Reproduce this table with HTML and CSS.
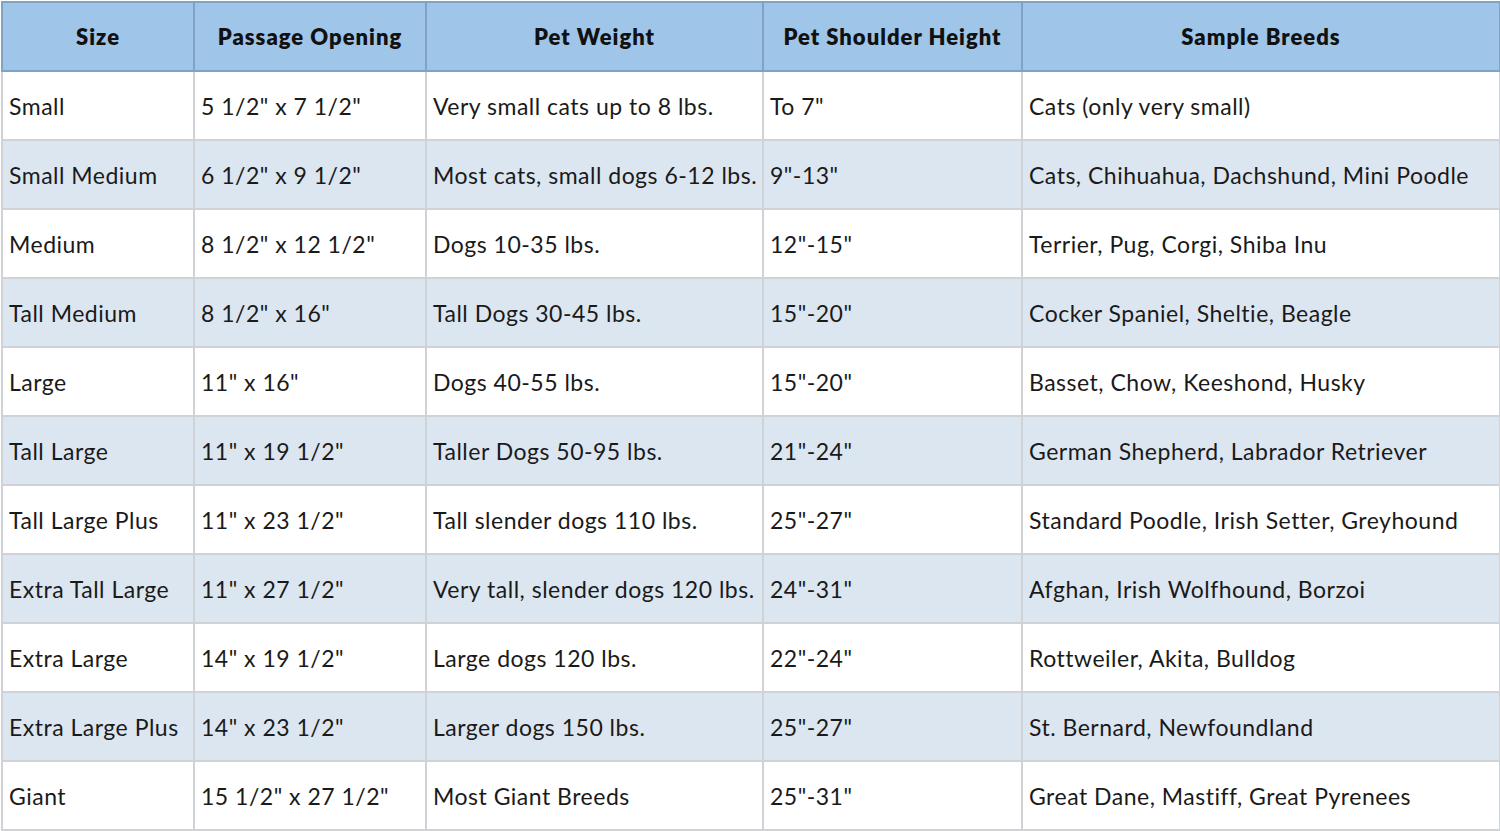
FILE: index.html
```html
<!DOCTYPE html>
<html>
<head>
<meta charset="utf-8">
<link rel="stylesheet" href="styles.css">
</head>
<body>
<table class="sizes">
  <colgroup>
    <col class="c1"><col class="c2"><col class="c3"><col class="c4"><col class="c5">
  </colgroup>
  <thead>
    <tr><th>Size</th><th>Passage Opening</th><th>Pet Weight</th><th>Pet Shoulder Height</th><th>Sample Breeds</th></tr>
  </thead>
  <tbody>
    <tr><td>Small</td><td>5 1/2" x 7 1/2"</td><td>Very small cats up to 8 lbs.</td><td>To 7"</td><td>Cats (only very small)</td></tr>
    <tr class="alt"><td>Small Medium</td><td>6 1/2" x 9 1/2"</td><td>Most cats, small dogs 6-12 lbs.</td><td>9"-13"</td><td>Cats, Chihuahua, Dachshund, Mini Poodle</td></tr>
    <tr><td>Medium</td><td>8 1/2" x 12 1/2"</td><td>Dogs 10-35 lbs.</td><td>12"-15"</td><td>Terrier, Pug, Corgi, Shiba Inu</td></tr>
    <tr class="alt"><td>Tall Medium</td><td>8 1/2" x 16"</td><td>Tall Dogs 30-45 lbs.</td><td>15"-20"</td><td>Cocker Spaniel, Sheltie, Beagle</td></tr>
    <tr><td>Large</td><td>11" x 16"</td><td>Dogs 40-55 lbs.</td><td>15"-20"</td><td>Basset, Chow, Keeshond, Husky</td></tr>
    <tr class="alt"><td>Tall Large</td><td>11" x 19 1/2"</td><td>Taller Dogs 50-95 lbs.</td><td>21"-24"</td><td>German Shepherd, Labrador Retriever</td></tr>
    <tr><td>Tall Large Plus</td><td>11" x 23 1/2"</td><td>Tall slender dogs 110 lbs.</td><td>25"-27"</td><td>Standard Poodle, Irish Setter, Greyhound</td></tr>
    <tr class="alt"><td>Extra Tall Large</td><td>11" x 27 1/2"</td><td>Very tall, slender dogs 120 lbs.</td><td>24"-31"</td><td>Afghan, Irish Wolfhound, Borzoi</td></tr>
    <tr><td>Extra Large</td><td>14" x 19 1/2"</td><td>Large dogs 120 lbs.</td><td>22"-24"</td><td>Rottweiler, Akita, Bulldog</td></tr>
    <tr class="alt"><td>Extra Large Plus</td><td>14" x 23 1/2"</td><td>Larger dogs 150 lbs.</td><td>25"-27"</td><td>St. Bernard, Newfoundland</td></tr>
    <tr><td>Giant</td><td>15 1/2" x 27 1/2"</td><td>Most Giant Breeds</td><td>25"-31"</td><td>Great Dane, Mastiff, Great Pyrenees</td></tr>
  </tbody>
</table>
</body>
</html>
```
FILE: styles.css
```css
html, body {
  margin: 0;
  padding: 0;
  background: #ffffff;
}
body {
  padding: 1px 0 0 1px;
  font-family: "Lato", "Liberation Sans", sans-serif;
  color: #1a1a1a;
}
.sizes {
  border-collapse: collapse;
  table-layout: fixed;
  width: 1498px;
}
.c1 { width: 192px; }
.c2 { width: 232px; }
.c3 { width: 337px; }
.c4 { width: 259px; }
.c5 { width: 478px; }
.sizes th {
  height: 67px;
  background: #9fc5e8;
  border: 2px solid #7fa3c6;
  font-size: 22px;
  font-weight: 800;
  letter-spacing: 1px;
  text-align: center;
  color: #111;
  padding: 0;
}
.sizes td {
  height: 67px;
  border: 2px solid #cfd3d8;
  font-size: 23px;
  letter-spacing: 0.5px;
  padding: 0 0 0 6px;
  white-space: nowrap;
  overflow: hidden;
}
.sizes tr.alt td {
  background: #dce6f1;
}
```
